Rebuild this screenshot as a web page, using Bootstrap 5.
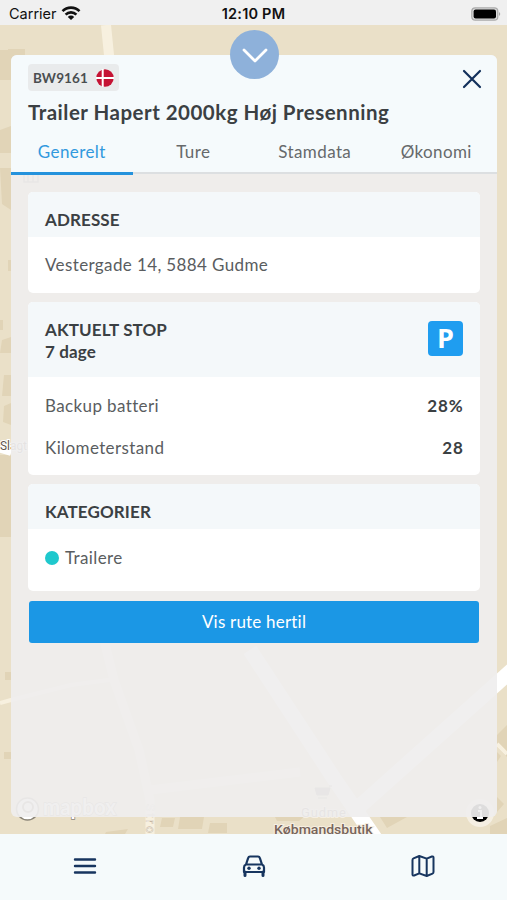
<!DOCTYPE html>
<html lang="da">
<head>
<meta charset="utf-8">
<meta name="viewport" content="width=device-width, initial-scale=1">
<title>Trailer Hapert 2000kg</title>
<link href="https://cdn.jsdelivr.net/npm/bootstrap@5.3.0/dist/css/bootstrap.min.css" rel="stylesheet">
<style>
body{font-family:Lato,"Liberation Sans",sans-serif;color:#3b4043;font-size:17px;line-height:22px;background:#eae0c8}
.screen{width:507px;height:900px}
.statusbar{height:25px;background:#f0f0f0;color:#111;font:14.5px/26px Inter,"Liberation Sans",sans-serif;padding:2px 9px 0 9px}
.statusbar .side{flex:1 1 0}
.clock{font-weight:600;letter-spacing:.2px}
.map-area{height:809px;padding:30px 10px 17px 11px}
.map-canvas{position:absolute;left:0;top:0;width:507px;height:809px}
.panel{background:rgba(239,238,238,.93);border-radius:6px}
.panel-head{height:119px;background:#f5fafc;border-bottom:2px solid #dcdfe1;border-radius:6px 6px 0 0}
.collapse-btn{position:absolute;left:219px;top:-25px;width:49px;height:49px;background:#8eb1da;border-radius:50%}
.plate{height:27px;background:#e9ebec;border-radius:4px;font-size:13.5px;font-weight:700;padding:0 5px;color:#4a4e50;letter-spacing:.1px}
.head-row{padding:9px 14px 0 17px}
.title{font-size:20.5px;line-height:26px;font-weight:700;margin:5px 0 0 17px;letter-spacing:.49px;white-space:nowrap}
.tabs{height:44px;margin-top:3px}
.tabs a{flex:1 1 0;text-align:center;color:#66696b;text-decoration:none;line-height:48px;height:47px;letter-spacing:.4px}
.tabs a.on{color:#3199de;border-bottom:3px solid #2492dc}
.panel-main{padding:18px 17px 0}
.box{background:#fff;border-radius:5px;overflow:hidden;margin-bottom:9px}
.box-head{background:#f4f8fa;padding:0 17px;font-weight:700;letter-spacing:.12px}
.box-line{padding:0 17px;color:#5a5d5f;letter-spacing:.38px}
.box-line b{color:#3b4043;letter-spacing:.9px;margin-right:-.7px}
.h45{height:45px;padding-top:10px}
.h56{height:56px}
.h62{height:62px;padding-bottom:5px}
.h75{height:75px}
.stop-label{padding-top:2px}
.h98{height:98px;padding-top:8px}
.row-a{height:42px}
.parking{width:35px;height:35px;background:#1f9df0;border-radius:4px;color:#fff;font:700 27px/34px "Open Sans",sans-serif;text-align:center;margin-bottom:3px}
.dot{width:14px;height:14px;border-radius:50%;background:#1fc8cd;margin-right:6px}
.route-btn{display:block;width:450px;height:42px;margin:10px 1px 0;background:#1b97e5;color:#fff;border-radius:3px;border:0;font-size:17px;padding:0;letter-spacing:.2px}
.bottom{height:66px;background:#f5fafb}
.bottom a{flex:1 1 0;display:flex;justify-content:center;padding-top:20px}
</style>
<script src="https://cdn.jsdelivr.net/npm/bootstrap@5.3.0/dist/js/bootstrap.bundle.min.js"></script>
</head>
<body>
<div class="screen d-flex flex-column overflow-hidden">
  <header class="statusbar d-flex align-items-center">
    <div class="side d-flex align-items-center gap-1"><span class="carrier">Carrier</span>
      <svg width="20" height="15" viewBox="0 0 20 15" fill="none" stroke="#111" stroke-width="2.6"><path d="M1.500 5.200a12 12 0 0 1 17 0M4.600 8.600a7.600 7.600 0 0 1 10.800 0"/><path d="M10 14 6.800 10.900a4.500 4.500 0 0 1 6.400 0z" fill="#111" stroke="none"/></svg>
    </div>
    <span class="clock">12:10 PM</span>
    <div class="side d-flex justify-content-end"><svg width="30" height="14" viewBox="0 0 30 14" style="margin-right:-3px"><rect x=".8" y=".8" width="26" height="12.400" rx="3.500" fill="#ddd" stroke="#aaa" stroke-width="1.200"/><rect x="2.600" y="2.600" width="22.400" height="8.800" rx="2" fill="#000"/><path d="M28 5q2.500 2 0 4z" fill="#aaa"/></svg></div>
  </header>

  <main class="map-area position-relative">
    <svg class="map-canvas" viewBox="0 25 507 809">
      <rect y="25" width="507" height="809" fill="#eae0c8"/>
      <g fill="#e1d4b7">
        <path d="M0 50h8v-1h17v10H12v21H0zM0 130l11-4v27H0zM0 168h11v42L2 204zM8 260h3v11H8zM0 320h3v10H0zM2 340l9-3v16H0zM4 375h7v21H2zM4 406l7-3v22l-8-3zM0 455h11v49H0zM0 504h11v33H0zM5 672h6v8H5zM4 752h7v7H4z"/>
        <path d="M162 818h13l-2 9h-13zM180 817h24l-2 12h-24zM210 823h17v10h-19zM106 832l22-3-3 5h-20zM275 817h29l-5 4h-22zM380 817h27l-20 11zM497 735l10-10v32l-10-10zM497 752l4 4-4 6zM497 797l7 7-7 8zM490 826l17-8v16h-17z"/>
      </g>
      <g fill="none" stroke="#f7f0df">
        <path d="M106 25l5 50" stroke-width="10"/>
        <path d="M0 703l11-3 60-15 45-6M497 744l10 10" stroke-width="4"/>
        <path d="M104 640l10 40 25 70 11 50v34M150 790l150-18" stroke-width="9"/>
      </g>
      <g fill="none" stroke="#fff"><path d="M-5 448l16 5" stroke-width="6"/><path d="M250 650l85 130 44 64" stroke-width="15"/><path d="M360 806l152-136" stroke-width="15"/></g>
      <text x="0" y="450" font-size="12" fill="#5f534c" stroke="#fff" stroke-width="2" paint-order="stroke" font-family="Roboto" textLength="27">Slagt</text>
      <g font-family="Roboto" font-size="13" fill="#76645b" stroke="#f6efe2" stroke-width="2" paint-order="stroke"><text x="301" y="817" textLength="45">Gudme</text><text x="274" y="833.500" textLength="98.500" lengthAdjust="spacingAndGlyphs" font-weight="500">Købmandsbutik</text></g>
      <path d="M315 788h15l-2 7h-11zM318 798h9M329 786h3" fill="#8b817b" stroke="#8b817b"/>
      <path d="M24 171v11h14v-11zM28 174v8M33 174v8" fill="none" stroke="#8f8a80" stroke-width="1.500"/>
      <text x="146" y="804" font-size="12" fill="#fff" stroke="#bba98b" stroke-width=".4" transform="rotate(90 146 804)" font-family="Roboto" textLength="29">Stro</text>
      <circle cx="27.500" cy="809" r="11" fill="#fff" stroke="#8b8578" stroke-width="1.500"/><circle cx="28" cy="807" r="5" fill="none" stroke="#8b8578" stroke-width="2"/>
      <text x="43" y="815" font-size="23" font-weight="700" fill="#fff" stroke="#8b8578" stroke-width="1.600" paint-order="stroke" textLength="73" lengthAdjust="spacingAndGlyphs" font-family="Lato">mapbox</text>
      <circle cx="480" cy="813" r="14" fill="#f5efe3"/><circle cx="480" cy="813" r="9" fill="#000"/>
      <path d="M478 811h3v7M477 818h6" fill="none" stroke="#fff" stroke-width="2"/><circle cx="480" cy="807.500" r="1.500" fill="#fff"/>
    </svg>

    <section class="panel position-relative h-100">
      <div class="panel-head">
        <div class="head-row d-flex justify-content-between">
          <span class="plate d-inline-flex align-items-center gap-2"><span class="plate-no">BW9161</span>
            <svg width="18" height="18" viewBox="0 0 18 18"><circle cx="9" cy="9" r="8.700" fill="#c51334"/><path d="M6.700 0v18M0 9h18" stroke="#fff" stroke-width="2"/></svg></span>
          <svg width="22" height="30" viewBox="0 0 22 30" fill="none" stroke="#12305b" stroke-width="2.200" stroke-linecap="round"><path d="M3 7l16 16M19 7L3 23"/></svg>
        </div>
        <h1 class="title"><span>Trailer Hapert 2000kg Høj Presenning</span></h1>
        <nav class="tabs d-flex"><a class="on" href="#"><span>Generelt</span></a><a href="#"><span>Ture</span></a><a href="#"><span>Stamdata</span></a><a href="#"><span>Økonomi</span></a></nav>
      </div>
      <div class="panel-main">
        <div class="box">
          <div class="box-head h45 d-flex align-items-center"><span>ADRESSE</span></div>
          <div class="box-line h56 d-flex align-items-center"><span>Vestergade 14, 5884 Gudme</span></div>
        </div>
        <div class="box">
          <div class="box-head h75 d-flex align-items-center justify-content-between"><div class="stop-label">AKTUELT STOP<br>7 dage</div><div class="parking">P</div></div>
          <div class="box-line h98">
            <div class="row-a d-flex align-items-center justify-content-between"><span>Backup batteri</span><b>28%</b></div>
            <div class="row-a d-flex align-items-center justify-content-between"><span>Kilometerstand</span><b>28</b></div>
          </div>
        </div>
        <div class="box">
          <div class="box-head h45 d-flex align-items-center"><span>KATEGORIER</span></div>
          <div class="box-line h62 d-flex align-items-center"><span class="dot"></span><span>Trailere</span></div>
        </div>
        <button class="route-btn btn">Vis rute hertil</button>
      </div>
      <div class="collapse-btn d-flex align-items-center justify-content-center"><svg width="28" height="18" viewBox="0 0 28 18" fill="none" stroke="#fff" stroke-width="2.800" stroke-linecap="round" stroke-linejoin="round"><path d="M3 4l11 11L25 4"/></svg></div>
    </section>
  </main>

  <nav class="bottom d-flex">
    <a href="#"><svg width="24" height="24" viewBox="0 0 24 24" fill="none" stroke="#17355f" stroke-width="2.400" stroke-linecap="round"><path d="M2 5.500h20M2 12h20M2 18.500h20"/></svg></a>
    <a href="#"><svg width="24" height="24" viewBox="0 0 24 24" fill="none" stroke="#17355f" stroke-width="2.200" stroke-linejoin="round" stroke-linecap="round"><path d="M4 10.500l2.200-6.600Q6.600 2.500 8 2.500h8q1.400 0 1.800 1.400L20 10.500M4 10.500h16q2 .8 2 3V18H2v-4.500q0-2.200 2-3z"/><path d="M3 18v3.500M21 18v3.500" stroke-width="3"/><circle cx="7" cy="14.200" r="1.700" fill="#17355f" stroke="none"/><circle cx="17" cy="14.200" r="1.700" fill="#17355f" stroke="none"/></svg></a>
    <a href="#"><svg width="24" height="24" viewBox="0 0 24 24" fill="none" stroke="#17355f" stroke-width="2" stroke-linejoin="round"><path d="M1.500 6q0-1.200 1-1.600L8.300 2l7.400 2.600 5.200-2.100q1.600-.5 1.600 1V18q0 1.200-1 1.600L15.700 22l-7.400-2.600-5.200 2.100q-1.600.5-1.600-1zM8.300 2v17.400M15.700 4.600V22"/></svg></a>
  </nav>
</div>
</body>
</html>
